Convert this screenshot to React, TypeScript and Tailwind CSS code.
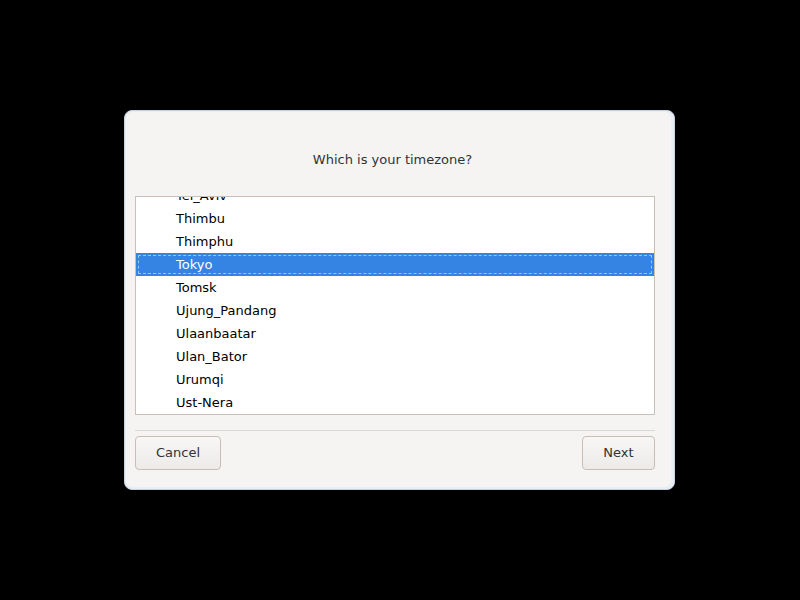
import React from "react";

const zones = [
  "Tel_Aviv",
  "Thimbu",
  "Thimphu",
  "Tokyo",
  "Tomsk",
  "Ujung_Pandang",
  "Ulaanbaatar",
  "Ulan_Bator",
  "Urumqi",
  "Ust-Nera",
  "Vientiane",
];

export default function App() {
  return (
    <div
      className="w-[800px] h-[600px] bg-black flex items-start justify-start"
      style={{ fontFamily: '"DejaVu Sans", sans-serif' }}
    >
      <div className="ml-[124px] mt-[110px] w-[551px] h-[380px] rounded-[8px] border border-[#c9d3df] bg-[#e9eef5] p-[1px] pr-[3px] pb-[2px]">
        <div className="w-full h-full rounded-[7px] bg-[#f5f4f2] flex flex-col pl-[9px]">
          <div className="w-[520px] flex flex-col">
            <div className="h-[84px] flex items-center justify-center pt-[12px] pr-[5px] text-[13px] text-[#2e3436]">
              Which is your timezone?
            </div>
            <div className="h-[219px] border border-[#c7c1ba] bg-white overflow-hidden">
              <div className="-mt-[13px]">
                {zones.map((z) => {
                  const sel = z === "Tokyo";
                  return (
                    <div
                      key={z}
                      className={
                        "h-[23px] flex items-center pl-[40px] text-[13px] " +
                        (sel ? "bg-[#3584e4] text-white relative" : "text-black")
                      }
                    >
                      {sel && (
                        <div className="absolute inset-[2px] border border-dashed border-[#9bc2f1]" />
                      )}
                      {z}
                    </div>
                  );
                })}
              </div>
            </div>
            <div className="mt-[15px] h-px bg-[#dcd8d3]" />
            <div className="mt-[5px] flex justify-between">
              <button className="w-[86px] h-[34px] rounded-[4px] border border-[#c5bfb8] bg-gradient-to-b from-[#f8f7f6] to-[#edebe9] text-[13px] text-[#2e3436]">
                Cancel
              </button>
              <button className="w-[73px] h-[34px] rounded-[4px] border border-[#c5bfb8] bg-gradient-to-b from-[#f8f7f6] to-[#edebe9] text-[13px] text-[#2e3436]">
                Next
              </button>
            </div>
          </div>
        </div>
      </div>
    </div>
  );
}
